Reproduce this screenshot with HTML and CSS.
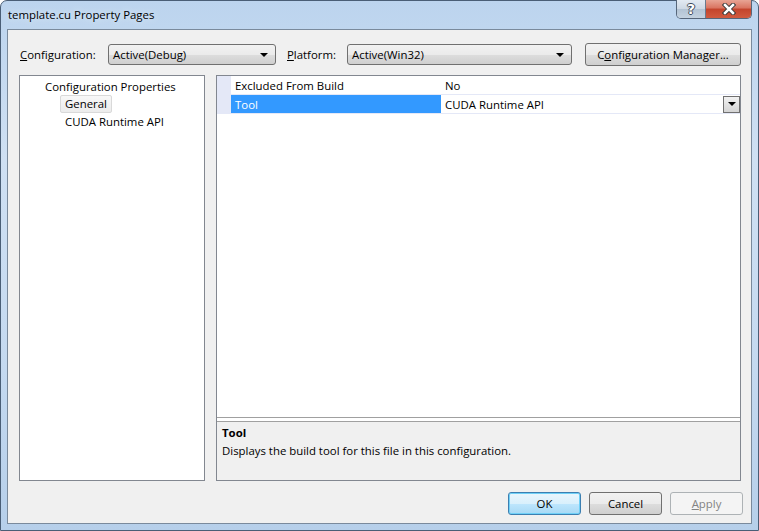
FILE: index.html
```html
<!DOCTYPE html>
<html lang="en">
<head>
    <meta charset="UTF-8">
    <title>template.cu Property Pages</title>
    <link rel="stylesheet" href="styles.css">
</head>
<body>

<div class="window">
    <!-- Title bar -->
    <div class="titlebar">
        <span class="title">template.cu Property Pages</span>
        <div class="caption-buttons">
            <div class="cap-btn help">?</div>
            <div class="cap-btn close">
                <svg width="16" height="12" viewBox="0 0 16 12">
                    <path d="M4 2 L12 10 M12 2 L4 10" stroke="#3b3b3b" stroke-width="4.5" stroke-linecap="square"/>
                    <path d="M4 2 L12 10 M12 2 L4 10" stroke="#ffffff" stroke-width="2.5" stroke-linecap="square"/>
                </svg>
            </div>
        </div>
    </div>

    <div class="client">
        <!-- Configuration / Platform selectors -->
        <div class="toolbar">
            <span class="lbl lbl-config"><u>C</u>onfiguration:</span>
            <div class="combo combo-config"><span>Active(Debug)</span><span class="arrow"></span></div>
            <span class="lbl lbl-platform"><u>P</u>latform:</span>
            <div class="combo combo-platform"><span>Active(Win32)</span><span class="arrow"></span></div>
            <button class="btn btn-manager">C<u>o</u>nfiguration Manager...</button>
        </div>

        <div class="panels">
            <!-- Tree -->
            <div class="tree">
                <div class="tree-item root">Configuration Properties</div>
                <div class="tree-item child"><span class="selected">General</span></div>
                <div class="tree-item child"><span>CUDA Runtime API</span></div>
            </div>

            <!-- Property grid -->
            <div class="props">
                <div class="grid">
                    <div class="grid-row">
                        <div class="gutter"></div>
                        <div class="name">Excluded From Build</div>
                        <div class="value">No</div>
                    </div>
                    <div class="grid-row active">
                        <div class="gutter"></div>
                        <div class="name">Tool</div>
                        <div class="value">CUDA Runtime API<span class="drop-btn"><span class="arrow"></span></span></div>
                    </div>
                </div>
                <div class="desc">
                    <div class="desc-title">Tool</div>
                    <div class="desc-text">Displays the build tool for this file in this configuration.</div>
                </div>
            </div>
        </div>

        <!-- Dialog buttons -->
        <div class="buttons">
            <button class="btn btn-default">OK</button>
            <button class="btn">Cancel</button>
            <button class="btn btn-disabled"><u>A</u>pply</button>
        </div>
    </div>
</div>

</body>
</html>
```

FILE: styles.css
```css
body {
    margin: 0;
    padding: 0;
    background-color: #ffffff;
    font-family: "Open Sans", "Noto Sans", sans-serif;
    font-size: 11.4px;
    color: #000000;
}

/* Aero frame */
.window {
    width: 759px;
    height: 531px;
    box-sizing: border-box;
    display: flex;
    flex-direction: column;
    padding: 0 6px 6px 6px;
    border: 1px solid #4a5e76;
    border-radius: 7px 7px 0 0;
    background: linear-gradient(to bottom, #bcd4ee 0%, #cfe0f3 30%, #c4d9f0 70%, #b6cfea 100%);
}

.titlebar {
    height: 28px;
    display: flex;
    align-items: flex-start;
    justify-content: space-between;
}

.title {
    margin-top: 6px;
    margin-left: 1px;
    font-size: 11.4px;
    color: #000000;
    text-shadow: 0 0 6px #e6f0fb;
}

.caption-buttons {
    display: flex;
    margin-top: -1px;
    border: 1px solid #56667a;
    border-top: none;
    border-radius: 0 0 5px 5px;
    overflow: hidden;
}

.cap-btn {
    height: 18px;
    display: flex;
    align-items: center;
    justify-content: center;
}

.cap-btn.help {
    width: 28px;
    border-right: 1px solid #6a7a8e;
    background: linear-gradient(to bottom, #e3eaf2 0%, #cdd8e4 50%, #b3c3d4 51%, #c4d2e0 100%);
    color: #ffffff;
    font-family: "DejaVu Sans", sans-serif;
    font-weight: bold;
    font-size: 14px;
    text-shadow: 1px 0 0 #3d4a5a, -1px 0 0 #3d4a5a, 0 1px 0 #3d4a5a, 0 -1px 0 #3d4a5a;
}

.cap-btn.close {
    width: 45px;
    background: linear-gradient(to bottom, #e8a494 0%, #d9735f 45%, #c3442c 50%, #d15a3f 100%);
}

/* Client area */
.client {
    flex: 1;
    display: flex;
    flex-direction: column;
    background-color: #f0f0f0;
    border: 1px solid #7a8a9c;
    padding: 13px 10px 0 11px;
}

.toolbar {
    height: 23px;
    display: flex;
    align-items: center;
}

.lbl-config {
    width: 88px;
    padding-left: 1px;
}

.lbl-platform {
    width: 60px;
    margin-left: 11px;
}

.combo {
    height: 21px;
    box-sizing: border-box;
    display: flex;
    align-items: center;
    justify-content: space-between;
    padding: 0 7px 0 4px;
    border: 1px solid #707070;
    border-radius: 3px;
    background: linear-gradient(to bottom, #f2f2f2 0%, #ebebeb 50%, #dddddd 51%, #cfcfcf 100%);
}

.combo-config {
    width: 168px;
}

.combo-platform {
    width: 225px;
}

.arrow {
    width: 0;
    height: 0;
    border-left: 4px solid transparent;
    border-right: 4px solid transparent;
    border-top: 4px solid #000000;
}

.btn {
    width: 73px;
    height: 23px;
    box-sizing: border-box;
    padding: 0;
    border: 1px solid #707070;
    border-radius: 3px;
    background: linear-gradient(to bottom, #f2f2f2 0%, #ebebeb 50%, #dddddd 51%, #cfcfcf 100%);
    font-family: "Open Sans", "Noto Sans", sans-serif;
    font-size: 11.4px;
    color: #000000;
}

.btn-manager {
    width: 156px;
    margin-left: 13px;
}

.btn-default {
    border-color: #3c7fb1;
    background: linear-gradient(to bottom, #eaf6fd 0%, #d9f0fc 50%, #bee6fd 51%, #a7d9f5 100%);
    box-shadow: inset 0 0 0 1px #6fd0f7;
}

.btn-disabled {
    border-color: #adb2b5;
    background: #f4f4f4;
    color: #838383;
}

/* Tree + property grid */
.panels {
    height: 406px;
    margin-top: 9px;
    display: flex;
    gap: 11px;
}

.tree {
    width: 186px;
    box-sizing: border-box;
    border: 1px solid #828790;
    background-color: #ffffff;
    padding-top: 1px;
}

.tree-item {
    height: 18px;
    display: flex;
    align-items: center;
}

.tree-item.root {
    padding-left: 25px;
}

.tree-item.child span {
    margin-left: 40px;
    padding: 0 4px;
    height: 16px;
    line-height: 16px;
    border: 1px solid transparent;
}

.tree-item.child span.selected {
    border-color: #d9d9d9;
    border-radius: 2px;
    background: linear-gradient(to bottom, #f8f8f8, #ececec);
}

.props {
    width: 525px;
    box-sizing: border-box;
    display: flex;
    flex-direction: column;
    border: 1px solid #828790;
    background-color: #ffffff;
}

.grid {
    flex: 1;
    border-bottom: 1px solid #a0a0a0;
}

.grid-row {
    height: 19px;
    box-sizing: border-box;
    display: flex;
    border-bottom: 1px solid #e4e8f7;
}

.gutter {
    width: 14px;
    background-color: #e4e8f7;
}

.name {
    width: 210px;
    padding-left: 4px;
    box-sizing: border-box;
    display: flex;
    align-items: center;
}

.value {
    flex: 1;
    padding-left: 4px;
    display: flex;
    align-items: center;
    justify-content: space-between;
}

.grid-row.active .name {
    background-color: #3399ff;
    color: #ffffff;
}

.drop-btn {
    width: 17px;
    height: 17px;
    box-sizing: border-box;
    display: flex;
    align-items: center;
    justify-content: center;
    border: 1px solid #707070;
    background: linear-gradient(to bottom, #f2f2f2, #d4d4d4);
}

.desc {
    height: 59px;
    margin-top: 3px;
    box-sizing: border-box;
    border-top: 1px solid #a0a0a0;
    background-color: #f0f0f0;
    padding: 2px 5px;
}

.desc-title {
    font-weight: bold;
    height: 18px;
    line-height: 18px;
}

.desc-text {
    height: 18px;
    line-height: 18px;
}

/* OK / Cancel / Apply */
.buttons {
    display: flex;
    justify-content: flex-end;
    gap: 8px;
    margin-top: 11px;
    margin-right: -2px;
}
```
